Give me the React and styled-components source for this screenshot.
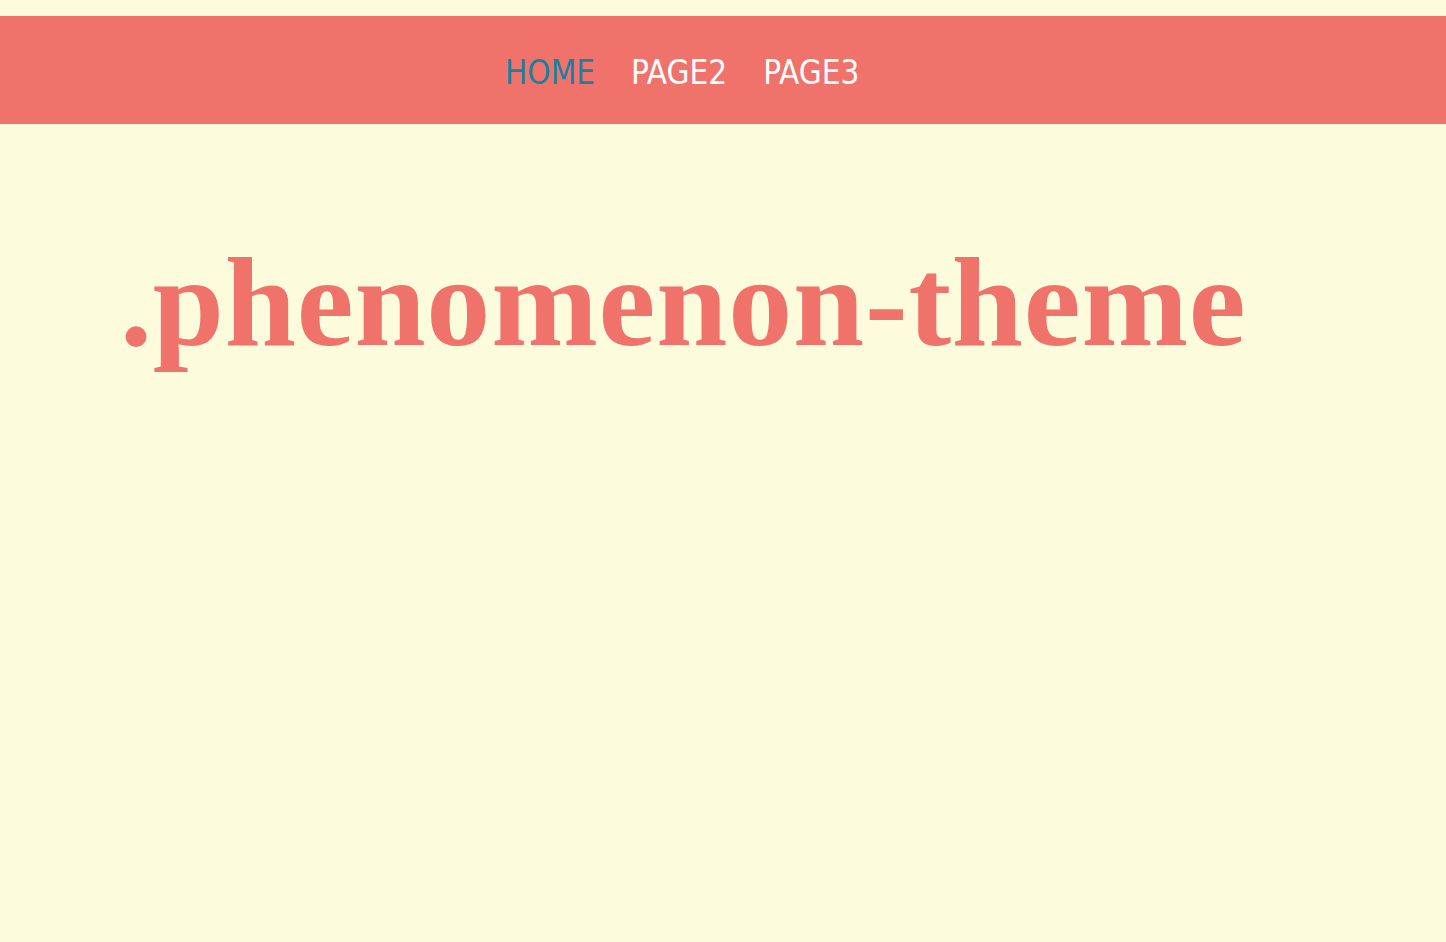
import React from "react";
import styled, { createGlobalStyle } from "styled-components";

const Global = createGlobalStyle`
  html, body {
    margin: 0;
    padding: 0;
    background: #fcfcdc;
  }
  body {
    font-family: "Liberation Serif", serif;
    min-height: 942px;
  }
`;

const Page = styled.div`
  padding-top: 16px;
`;

const NavBar = styled.nav`
  height: 108px;
  background: #ef736b;
  display: flex;
  align-items: center;
  padding-left: 505px;
  gap: 36px;
`;

const NavLink = styled.a`
  font-family: "DejaVu Sans Condensed", "DejaVu Sans", sans-serif;
  font-size: 33px;
  line-height: 1;
  padding-top: 4px;
  text-decoration: none;
  color: ${(p) => (p.$active ? "#1a7fa2" : "#ffffff")};
  cursor: pointer;
`;

const Main = styled.main`
  padding: 114px 0 0 120px;
`;

const Title = styled.h1`
  margin: 0;
  font-family: "Liberation Serif", "Times New Roman", serif;
  font-weight: 700;
  font-size: 128px;
  line-height: 128px;
  letter-spacing: 0.8px;
  color: #ef736b;
`;

export default function App() {
  return (
    <>
      <Global />
      <Page>
        <NavBar>
          <NavLink $active>HOME</NavLink>
          <NavLink>PAGE2</NavLink>
          <NavLink>PAGE3</NavLink>
        </NavBar>
        <Main>
          <Title>.phenomenon-theme</Title>
        </Main>
      </Page>
    </>
  );
}
